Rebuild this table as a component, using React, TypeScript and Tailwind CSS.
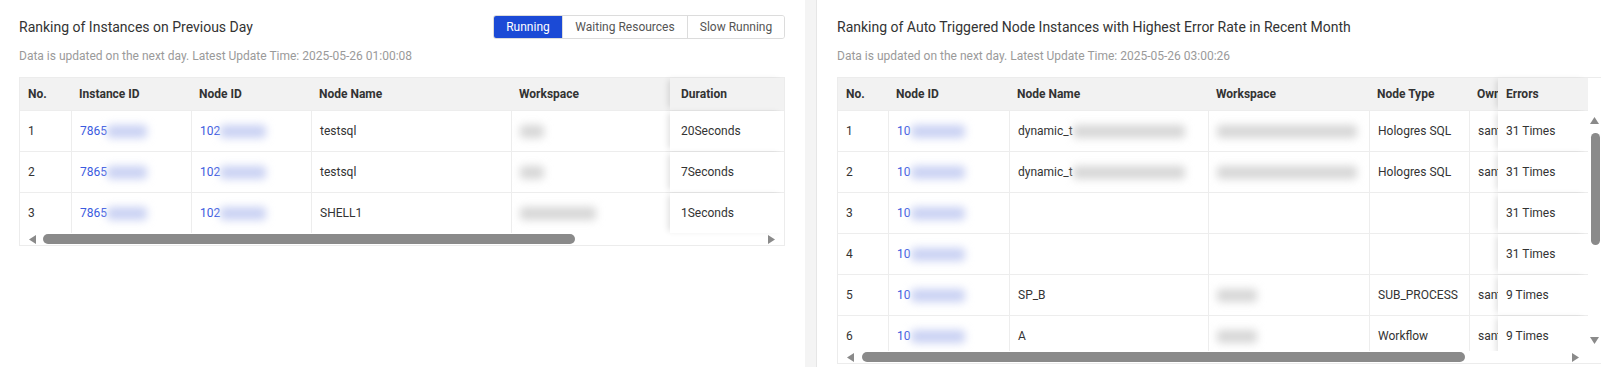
import React from "react";

const FONT = "font-['Roboto','Liberation_Sans',sans-serif]";
const LINK = "text-[#3b5be0]";

// blurred placeholder for masked values
function Masked({ w, tone = "blue" }: { w: number; tone?: "blue" | "gray" }) {
  return (
    <span
      className={`inline-block h-[13px] rounded-sm blur-[4px] align-middle ${
        tone === "blue" ? "bg-[#c9d1f3]" : "bg-[#d6d6d6]"
      }`}
      style={{ width: w }}
    />
  );
}

function Triangle({ dir }: { dir: "left" | "right" | "up" | "down" }) {
  const d =
    dir === "left"
      ? "M7 0 L7 9 L0 4.5 Z"
      : dir === "right"
      ? "M0 0 L0 9 L7 4.5 Z"
      : dir === "up"
      ? "M0 7 L9 7 L4.5 0 Z"
      : "M0 0 L9 0 L4.5 7 Z";
  const horiz = dir === "left" || dir === "right";
  return (
    <svg
      width={horiz ? 7 : 9}
      height={horiz ? 9 : 7}
      viewBox={horiz ? "0 0 7 9" : "0 0 9 7"}
      className="shrink-0"
    >
      <path d={d} fill="#8a8a8a" />
    </svg>
  );
}

function HScroll({ thumbLeft, thumbWidth }: { thumbLeft: number; thumbWidth: number }) {
  return (
    <div className="relative flex h-[12px] items-center justify-between bg-white px-[9px]">
      <Triangle dir="left" />
      <div
        className="absolute top-[1px] h-[10px] rounded-full bg-[#8a8a8a]"
        style={{ left: thumbLeft, width: thumbWidth }}
      />
      <Triangle dir="right" />
    </div>
  );
}

function Header({ title, sub, right }: { title: string; sub: string; right?: React.ReactNode }) {
  return (
    <>
      <div className="mt-[15px] flex h-[24px] items-center justify-between">
        <h2 className="text-[14px] leading-[20px] text-[#333]">{title}</h2>
        {right}
      </div>
      <p className="mt-[8px] text-[12px] leading-[18px] text-[#9a9a9a]">{sub}</p>
    </>
  );
}

function Tabs() {
  const tabs = ["Running", "Waiting Resources", "Slow Running"];
  const widths = ["w-[68px]", "w-[125px]", "w-[97px]"];
  return (
    <div className="flex h-[24px] overflow-hidden rounded-[3px] border border-[#dcdcdc] text-[12px]">
      {tabs.map((t, i) => (
        <div
          key={t}
          className={`flex items-center justify-center ${widths[i]} ${
            i === 0 ? "bg-[#1b4ad6] text-white" : "bg-white text-[#555]"
          } ${i > 0 ? "border-l border-[#dcdcdc]" : ""}`}
        >
          {t}
        </div>
      ))}
    </div>
  );
}

const cellBase = "flex items-center shrink-0 px-2 whitespace-nowrap overflow-hidden";
const fixedShadow = "relative z-10 shadow-[-4px_0_6px_-2px_rgba(0,0,0,0.12)]";

const leftCols = [
  { title: "No.", w: 51 },
  { title: "Instance ID", w: 120 },
  { title: "Node ID", w: 120 },
  { title: "Node Name", w: 200 },
  { title: "Workspace", w: 159 },
];

const leftRows = [
  { no: "1", name: "testsql", ws: 24, dur: "20Seconds" },
  { no: "2", name: "testsql", ws: 24, dur: "7Seconds" },
  { no: "3", name: "SHELL1", ws: 76, dur: "1Seconds" },
];

function LeftTable() {
  return (
    <div className="mt-[12px] w-[766px] border border-[#ececec] text-[12px] text-[#333]">
      <div className="flex h-[32px] bg-[#f2f2f2] font-bold">
        {leftCols.map((c) => (
          <div key={c.title} className={cellBase} style={{ width: c.w }}>
            {c.title}
          </div>
        ))}
        <div className={`${cellBase} ${fixedShadow} flex-1 bg-[#f2f2f2] pl-[11px]`}>Duration</div>
      </div>
      {leftRows.map((r) => (
        <div key={r.no} className="flex h-[41px] border-t border-[#ededed]">
          <div className={cellBase} style={{ width: 51 }}>{r.no}</div>
          <div className={`${cellBase} border-l border-[#ededed] ${LINK}`} style={{ width: 120 }}>
            7865<Masked w={40} />
          </div>
          <div className={`${cellBase} border-l border-[#ededed] ${LINK}`} style={{ width: 120 }}>
            102<Masked w={46} />
          </div>
          <div className={`${cellBase} border-l border-[#ededed]`} style={{ width: 200 }}>{r.name}</div>
          <div className={`${cellBase} border-l border-[#ededed]`} style={{ width: 159 }}>
            <Masked w={r.ws} tone="gray" />
          </div>
          <div className={`${cellBase} ${fixedShadow} flex-1 bg-white pl-[11px]`}>{r.dur}</div>
        </div>
      ))}
      <HScroll thumbLeft={23} thumbWidth={532} />
    </div>
  );
}

const rightRows = [
  { no: "1", name: "dynamic_t", nm: 112, ws: 140, type: "Hologres SQL", owner: "santiago", err: "31 Times" },
  { no: "2", name: "dynamic_t", nm: 112, ws: 140, type: "Hologres SQL", owner: "santiago", err: "31 Times" },
  { no: "3", name: "", nm: 0, ws: 0, type: "", owner: "", err: "31 Times" },
  { no: "4", name: "", nm: 0, ws: 0, type: "", owner: "", err: "31 Times" },
  { no: "5", name: "SP_B", nm: 0, ws: 40, type: "SUB_PROCESS", owner: "santiago", err: "9 Times" },
  { no: "6", name: "A", nm: 0, ws: 40, type: "Workflow", owner: "santiago", err: "9 Times" },
];

function RightTable() {
  const sep = "border-l border-[#ededed]";
  return (
    <div className="mt-[12px] w-[765px] border border-[#ececec] text-[12px] text-[#333]">
      <div className="flex h-[32px] font-bold">
        <div className="flex min-w-0 flex-1 bg-[#f2f2f2]">
          <div className={cellBase} style={{ width: 50 }}>No.</div>
          <div className={cellBase} style={{ width: 121 }}>Node ID</div>
          <div className={cellBase} style={{ width: 199 }}>Node Name</div>
          <div className={cellBase} style={{ width: 161 }}>Workspace</div>
          <div className={cellBase} style={{ width: 100 }}>Node Type</div>
          <div className={`${cellBase} min-w-0 flex-1 shrink`}>Owner</div>
          <div className={`${cellBase} ${fixedShadow} w-[90px] bg-[#f2f2f2]`}>Errors</div>
        </div>
        <div className="w-[13px] shrink-0 bg-white" />
      </div>
      <div className="flex h-[241px]">
        <div className="min-w-0 flex-1 overflow-hidden">
          {rightRows.map((r) => (
            <div key={r.no} className="flex h-[41px] border-t border-[#ededed]">
              <div className={cellBase} style={{ width: 50 }}>{r.no}</div>
              <div className={`${cellBase} ${sep} ${LINK}`} style={{ width: 121 }}>
                10<Masked w={54} />
              </div>
              <div className={`${cellBase} ${sep}`} style={{ width: 199 }}>
                {r.name}
                {r.nm > 0 && <Masked w={r.nm} tone="gray" />}
              </div>
              <div className={`${cellBase} ${sep}`} style={{ width: 161 }}>
                {r.ws > 0 && <Masked w={r.ws} tone="gray" />}
              </div>
              <div className={`${cellBase} ${sep}`} style={{ width: 100 }}>{r.type}</div>
              <div className={`${cellBase} ${sep} min-w-0 flex-1 shrink`}>{r.owner}</div>
              <div className={`${cellBase} ${fixedShadow} w-[90px] bg-white`}>{r.err}</div>
            </div>
          ))}
        </div>
        <div className="relative flex w-[13px] shrink-0 flex-col items-center justify-between bg-white py-[7px]">
          <Triangle dir="up" />
          <div className="absolute left-[3px] top-[23px] h-[112px] w-[9px] rounded-full bg-[#8a8a8a]" />
          <Triangle dir="down" />
        </div>
      </div>
      <div className="w-[750px]">
        <HScroll thumbLeft={24} thumbWidth={603} />
      </div>
    </div>
  );
}

export default function App() {
  return (
    <div className={`flex h-[367px] w-[1601px] overflow-hidden bg-white ${FONT}`}>
      <section className="w-[805px] shrink-0 pl-[19px] pr-5">
        <Header
          title="Ranking of Instances on Previous Day"
          sub="Data is updated on the next day. Latest Update Time: 2025-05-26 01:00:08"
          right={<Tabs />}
        />
        <LeftTable />
      </section>
      <div className="w-[12px] shrink-0 border-r border-[#e6e6e6] bg-[#f4f4f4]" />
      <section className="min-w-0 flex-1 overflow-hidden pl-5">
        <Header
          title="Ranking of Auto Triggered Node Instances with Highest Error Rate in Recent Month"
          sub="Data is updated on the next day. Latest Update Time: 2025-05-26 03:00:26"
        />
        <RightTable />
      </section>
    </div>
  );
}
